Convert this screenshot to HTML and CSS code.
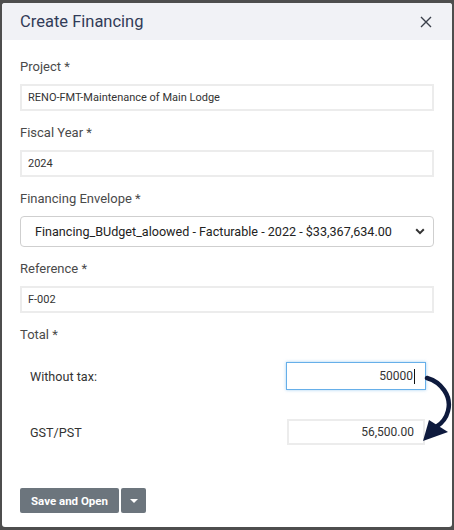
FILE: index.html
```html
<!DOCTYPE html>
<html lang="en">
<head>
<meta charset="utf-8">
<title>Create Financing</title>
<link rel="stylesheet" href="styles.css">
</head>
<body>
<div class="modal">
  <div class="modal-header">
    <h1 class="modal-title">Create Financing</h1>
    <button class="close" aria-label="Close">
      <svg width="12" height="12" viewBox="0 0 12 12"><path d="M1 1L11 11M11 1L1 11" stroke="#3a3f4a" stroke-width="1.4" fill="none"/></svg>
    </button>
  </div>
  <div class="modal-body">
    <div class="group">
      <label class="label">Project *</label>
      <div class="field">RENO-FMT-Maintenance of Main Lodge</div>
    </div>
    <div class="group">
      <label class="label">Fiscal Year *</label>
      <div class="field">2024</div>
    </div>
    <div class="group">
      <label class="label">Financing Envelope *</label>
      <div class="select">
        <span>Financing_BUdget_aloowed - Facturable - 2022 - $33,367,634.00</span>
        <svg width="10" height="7" viewBox="0 0 10 7"><path d="M1.2 1.3L5 5.1L8.8 1.3" stroke="#333" stroke-width="2" fill="none"/></svg>
      </div>
    </div>
    <div class="group">
      <label class="label">Reference *</label>
      <div class="field">F-002</div>
    </div>
    <div class="group total">
      <label class="label">Total *</label>
      <div class="tax-row first">
        <span class="tax-label">Without tax:</span>
        <div class="amount focused">50000<span class="caret"></span></div>
      </div>
      <div class="tax-row">
        <span class="tax-label">GST/PST</span>
        <div class="amount readonly">56,500.00</div>
      </div>
      <svg class="flow-arrow" width="40" height="80" viewBox="420 370 40 80">
        <path d="M427 376 C441 380 452 394 448 409 C446 417 441 422 436 425" stroke="#0e1a3d" stroke-width="4.5" fill="none" stroke-linecap="round"/>
        <polygon points="423,439 429,418 448,430" fill="#0e1a3d"/>
      </svg>
    </div>
    <div class="actions">
      <button class="btn">Save and Open</button>
      <button class="btn toggle" aria-label="More">
        <svg width="8" height="4" viewBox="0 0 8 4"><path d="M0 0H8L4 4Z" fill="#fff"/></svg>
      </button>
    </div>
  </div>
</div>
</body>
</html>
```

FILE: styles.css
```css
* { box-sizing: border-box; }

body {
  margin: 0;
  background: #4e4e4e;
  font-family: Roboto, "Liberation Sans", Arial, sans-serif;
  height: 530px;
  overflow: hidden;
}

.modal {
  margin: 3px 0 0 2px;
  width: 450px;
  height: 524px;
  background: #fff;
  border-radius: 3px;
  overflow: hidden;
  position: relative;
}

.modal-header {
  height: 37px;
  background: #f1f2f6;
  display: flex;
  align-items: center;
  justify-content: space-between;
  padding: 0 18px 0 18px;
}

.modal-title {
  margin: 0;
  font-size: 16.5px;
  font-weight: 400;
  color: #323c58;
}

.close {
  border: 0;
  background: none;
  padding: 0;
  display: flex;
  margin-right: 2px;
}

.modal-body {
  padding: 17px 18px 0 18px;
}

.group {
  margin-bottom: 12px;
}

.label {
  display: block;
  font-size: 13px;
  line-height: 20px;
  color: #4a4a4a;
  margin-bottom: 7px;
}

.field {
  height: 27px;
  border: 2px solid #ececec;
  padding: 0 6px;
  display: flex;
  align-items: center;
  font-size: 11px;
  color: #333;
}

.select {
  height: 31px;
  border: 1px solid #cfcfcf;
  border-radius: 4px;
  padding: 0 8px 0 14px;
  display: flex;
  align-items: center;
  justify-content: space-between;
  font-size: 12.6px;
  color: #222;
}

.total .label {
  margin-bottom: 17px;
}

.tax-row {
  display: flex;
  align-items: center;
  justify-content: space-between;
  padding: 0 8px 0 10px;
}

.tax-row.first {
  margin-bottom: 29px;
}

.tax-label {
  font-size: 12.6px;
  color: #333;
}

.amount {
  width: 140px;
  height: 28px;
  display: flex;
  align-items: center;
  justify-content: flex-end;
  padding-right: 10px;
  font-size: 12px;
  color: #333;
}

.amount.focused {
  border: 1px solid #66afe9;
  box-shadow: 0 0 3px rgba(102, 175, 233, 0.6);
}

.amount.readonly {
  width: 138px;
  height: 26px;
  margin-right: 1px;
  border: 2px solid #ececec;
  padding-right: 9px;
}

.caret {
  display: inline-block;
  width: 1px;
  height: 15px;
  background: #111;
  margin-left: 1px;
}

.total {
  position: relative;
}

.flow-arrow {
  position: absolute;
  left: 400px;
  top: 47px;
}

.actions {
  margin-top: 43px;
  display: flex;
  gap: 2px;
}

.btn {
  height: 25px;
  border: 0;
  border-radius: 2px;
  background: #6c757d;
  color: #fff;
  font-family: inherit;
  font-size: 11.5px;
  font-weight: 700;
  padding: 0;
  width: 99px;
  white-space: nowrap;
}

.btn.toggle {
  width: 25px;
  display: flex;
  align-items: center;
  justify-content: center;
}
```
